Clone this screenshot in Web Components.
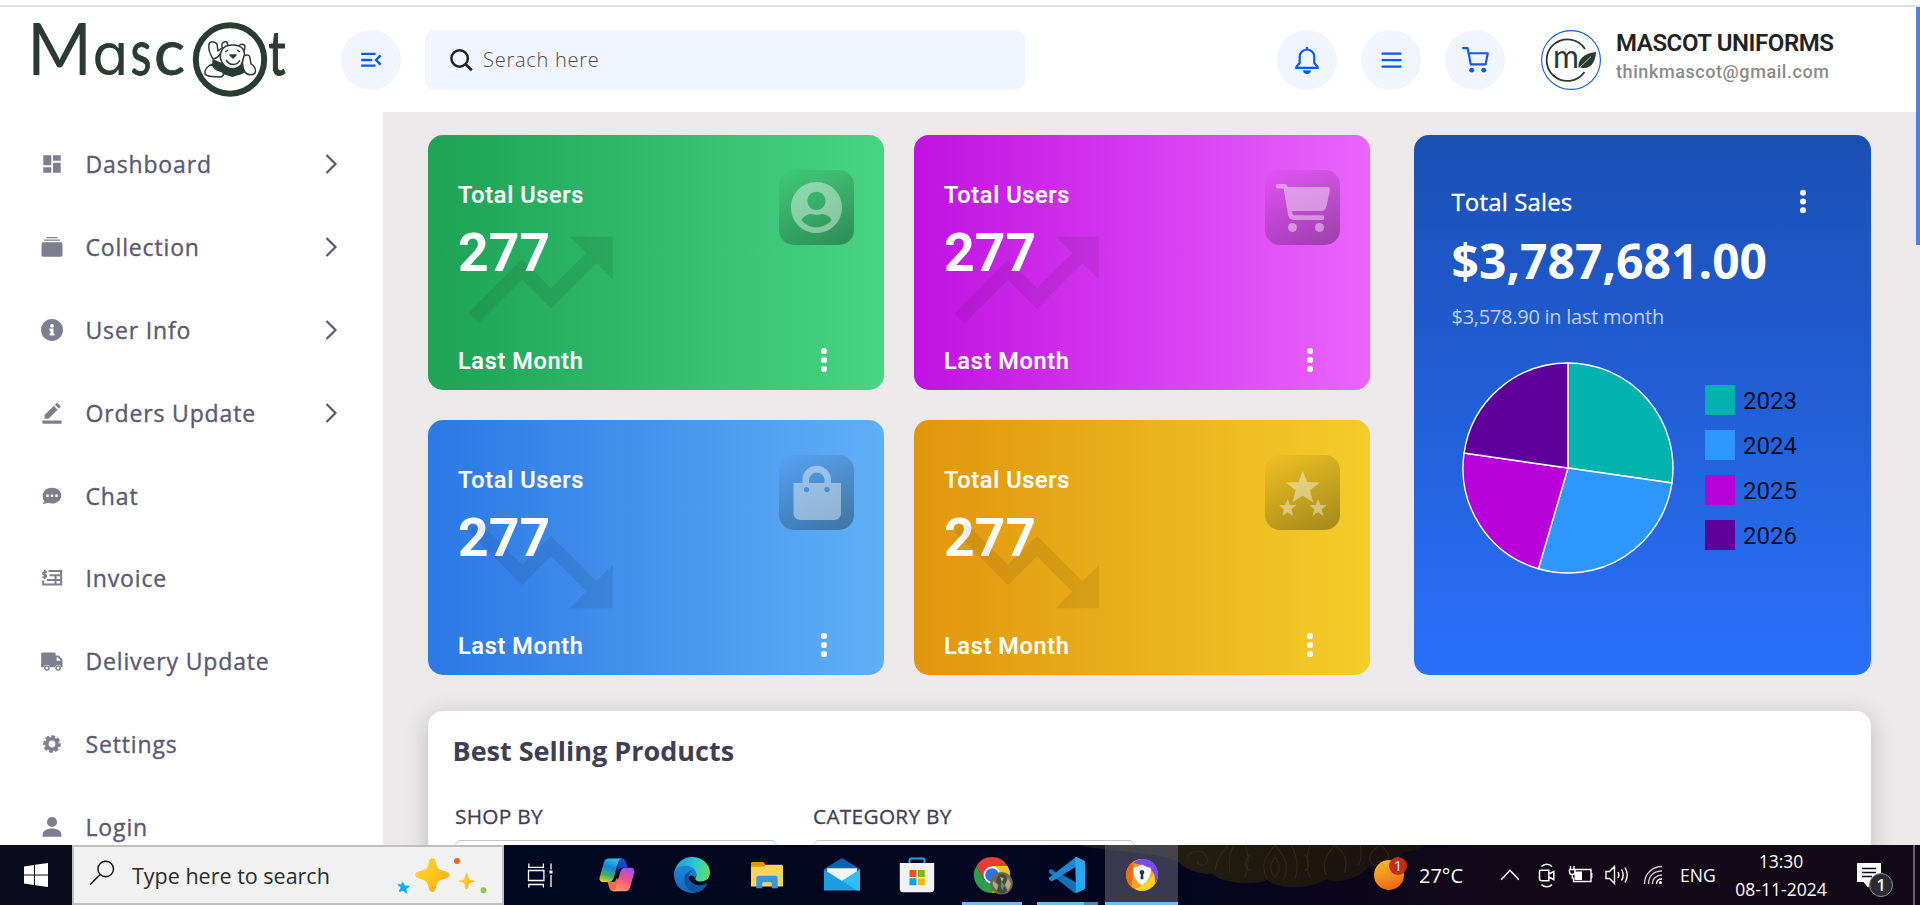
<!DOCTYPE html>
<html lang="en">
<head>
<meta charset="utf-8">
<title>Mascot Dashboard</title>
<style>
html,body{margin:0;height:100%;overflow:hidden;background:#fff;font-family:"Open Sans",sans-serif}
</style>
</head>
<body>
<app-shell></app-shell>
<script>
const define=(name,markup,setup)=>customElements.define(name,class extends HTMLElement{
  connectedCallback(){
    if(this.shadowRoot)return;
    const t=document.createElement('template');
    t.innerHTML=typeof markup==='function'?markup(this):markup;
    this.attachShadow({mode:'open'}).append(t.content.cloneNode(true));
    if(setup)setup(this);
  }
});

/* name: [viewBox, drawing] */
const ICONS={
  dashboard:['0 0 24 24','<path d="M3.3 3.3h8v10h-8zM3.3 15.2h8v5.5h-8zM13 3.3h7.7v5.5H13zM13 10.7h7.7v10H13z"/>'],
  collection:['0 0 24 24','<path d="M6.5 2h11v1.2h-11zM4 4.6h16v1.2H4zM3 7.2h18a1.5 1.5 0 0 1 1.5 1.5v11.4a1.6 1.6 0 0 1-1.6 1.6H3.1a1.6 1.6 0 0 1-1.6-1.6V8.7A1.5 1.5 0 0 1 3 7.2z"/>'],
  info:['0 0 512 512','<path d="M256 22C127 22 22 127 22 256s105 234 234 234 234-105 234-234S385 22 256 22zm0 104a40 40 0 1 1 0 80 40 40 0 0 1 0-80zm54 238c0 6-5 11-11 11h-86c-6 0-11-5-11-11v-23c0-6 5-11 11-11h11v-60h-11c-6 0-11-5-11-11v-23c0-6 5-11 11-11h64c6 0 11 5 11 11v94h11c6 0 11 5 11 11z"/>'],
  edit:['0 0 24 24','<path d="M2.5 19.6h19v3.2h-19zM4.6 17.8v-3.9l9.2-9.1 3.9 3.9-9.2 9.1zM14.9 3.7l1.3-1.3c.5-.5 1.200-.5 1.700 0l2.200 2.200c.5.5.5 1.200 0 1.700l-1.300 1.300z"/>'],
  chat:['0 0 24 24','<path fill-rule="evenodd" d="M12 3.800c5.200 0 9.300 3.500 9.300 7.900s-4.100 7.900-9.300 7.900c-1.500 0-2.900-.3-4.200-.8-1.400.9-3.200 1.200-4.800 1.100.7-.9 1.200-1.900 1.300-2.900a7.300 7.300 0 0 1-1.600-5.300c0-4.400 4.100-7.900 9.300-7.900zM6.300 10.600v2.400h2.400v-2.400zm4.500 0v2.400h2.400v-2.400zm4.500 0v2.400h2.400v-2.400z"/>'],
  invoice:['0 0 24 24','<g fill="none" stroke="currentColor" stroke-width="2"><path d="M9.500 5h11.700v13.600H3.200v-4M9.500 9.300h12M7 14h14M15.500 9.300v9.300M9.500 4.100v2"/><path stroke-width="1.600" d="M7 6.100H4.200c-1.800 0-1.800 2.600 0 2.600h1c1.800 0 1.800 2.600 0 2.600H2.300M4.700 4v9"/></g>'],
  truck:['0 0 24 24','<path fill-rule="evenodd" d="M2.500 3.600h11.800c.8 0 1.400.6 1.400 1.400v1.500h3.200l3.600 4.200v7.500h-1.300a3.200 3.200 0 0 0-6.200 0H10a3.200 3.200 0 0 0-6.200 0H1.200V5c0-.8.500-1.400 1.300-1.400zM16.600 8.200v3.600h4.200L18 8.200z"/><path fill-rule="evenodd" d="M6.900 16.200a2.800 2.800 0 1 1 0 5.600 2.800 2.800 0 0 1 0-5.600zm0 1.500a1.300 1.300 0 1 0 0 2.600 1.300 1.300 0 0 0 0-2.600zM18.100 16.200a2.800 2.800 0 1 1 0 5.600 2.800 2.800 0 0 1 0-5.600zm0 1.500a1.300 1.300 0 1 0 0 2.600 1.300 1.300 0 0 0 0-2.600z"/>'],
  gear:['0 0 24 24','<circle cx="12" cy="12" r="5.200" fill="none" stroke="currentColor" stroke-width="3.600"/><circle cx="12" cy="12" r="7.500" fill="none" stroke="currentColor" stroke-width="2.600" stroke-dasharray="3.800 2.090" stroke-dashoffset="1"/>'],
  user:['0 0 24 24','<circle cx="12" cy="7" r="5"/><path d="M2.600 21.800v-2.300c0-3.600 3.900-6.100 9.400-6.100s9.400 2.500 9.400 6.100v2.300z"/>'],
  chevron:['0 0 24 24','<path d="M7.500 3l9 9-9 9" fill="none" stroke="currentColor" stroke-width="2.200"/>'],
  toggle:['0 0 24 24','<path d="M2.200 5.800h14.300M2.200 12h11M2.200 17.700h14.300M21.600 7.400L17 12l4.600 4.600" fill="none" stroke="currentColor" stroke-width="2.300"/>'],
  search:['0 0 24 24','<circle cx="10.200" cy="10" r="7.900" fill="none" stroke="currentColor" stroke-width="2.400"/><path d="M15.900 15.600l6 5.700" stroke="currentColor" stroke-width="2.600" fill="none"/>'],
  bell:['0 0 30 30','<path d="M15 2v3M15 4.500c-4.300 0-7.300 3.300-7.300 7.500v6L4.300 22v.8h21.400V22l-3.400-4V12c0-4.200-3-7.500-7.300-7.500z" fill="none" stroke="currentColor" stroke-width="2.200"/><path d="M11.200 25.200h7.600a3.800 3.800 0 0 1-7.600 0z"/>'],
  burger:['0 0 24 24','<path d="M2.500 5.400h19M2.500 11.600h19M2.500 17.800h19" stroke="currentColor" stroke-width="2.200" fill="none"/>'],
  cart:['0 0 30 30','<path d="M1.300 2.200h5.500l3.300 16.800h15.400L27.700 7.500H8" fill="none" stroke="currentColor" stroke-width="2.200" stroke-linejoin="round"/><circle cx="11" cy="25" r="2.500"/><circle cx="23.500" cy="25" r="2.500"/>'],
  account:['-21 -21 538 554','<path d="M248 8C111 8 0 119 0 256s111 248 248 248 248-111 248-248S385 8 248 8zm0 96c48.600 0 88 39.400 88 88s-39.400 88-88 88-88-39.400-88-88 39.400-88 88-88zm0 344c-58.700 0-111.300-26.600-146.500-68.200 18.800-35.400 55.600-59.800 98.500-59.800 2.400 0 4.800.4 7.100 1.100 13 4.200 26.600 6.900 40.900 6.900 14.300 0 28-2.700 40.900-6.900 2.300-.7 4.700-1.100 7.100-1.100 42.900 0 79.700 24.400 98.500 59.800C359.300 421.400 306.700 448 248 448z"/>'],
  basket:['0 0 75 75','<path d="M13 14h6.500c1.500 0 2.500 1 3 3h40c1.700 0 2.800 1.400 2.400 3l-3.600 17c-.7 2.700-2.500 4-5 4H27l.3 2c.3 1.600 1 2.300 2.500 2.300H57a2.300 2.300 0 0 1 0 4.600H29c-3.500 0-5.500-2-6-5.400L18.600 18.600H13a2.300 2.300 0 0 1 0-4.600z"/><circle cx="27.500" cy="57.500" r="4.500"/><circle cx="54.500" cy="57.500" r="4.500"/>'],
  bag:['0 0 75 75','<path fill-rule="evenodd" d="M14.500 28h9v-3.500a14 13.500 0 0 1 28.500 0V28h10v30.500a6.500 6.500 0 0 1-6.500 6.500H21a6.500 6.500 0 0 1-6.500-6.500zM30 28h15.500v-3a7.750 7.500 0 0 0-15.500 0zM27.500 32a2.600 2.600 0 1 0 0 5.200 2.600 2.600 0 0 0 0-5.200zm20.500 0a2.600 2.600 0 1 0 0 5.200 2.600 2.600 0 0 0 0-5.200z"/>'],
  stars:['0 0 75 75','<path d="M37.800 15.700l4.300 11.200 12.500.6-9.700 7.900 3.300 11.900-10.400-6.600-10.400 6.600 3.300-11.900-9.700-7.900 12.500-.6z"/><path d="M22.700 44l2.300 6 6.500.3-5.100 4 1.800 6.700-5.500-3.700-5.500 3.700 1.800-6.700-5.100-4 6.500-.3zM53 44l2.300 6 6.500.3-5.100 4 1.800 6.700-5.500-3.700-5.500 3.700 1.800-6.700-5.100-4 6.500-.3z"/>'],
  up:['0 0 24 24','<path d="m16 6 2.290 2.290-4.880 4.880-4-4L2 16.590 3.410 18l6-6 4 4 6.300-6.290L22 12V6z"/>'],
  down:['0 0 24 24','<path d="m16 18 2.290-2.290-4.880-4.880-4 4L2 7.410 3.410 6l6 6 4-4 6.300 6.290L22 12v6z"/>'],
  dots:['0 0 12 30','<circle cx="6" cy="6" r="3.100"/><circle cx="6" cy="15" r="3.100"/><circle cx="6" cy="24" r="3.100"/>'],
  start:['0 0 24 24','<path d="M0 3.400l9.900-1.400v9.400H0zM11 1.800L24 0v11.400H11zM0 12.400h9.900V22L0 20.600zM11 12.400h13V24l-13-1.800z"/>'],
  find:['0 0 26 26','<g fill="none" stroke="currentColor" stroke-width="1.400"><circle cx="16.700" cy="9" r="7.800"/><path d="M11.100 14.600L1.300 24.600"/></g>'],
  sparkle:['0 0 90 36','<defs><linearGradient id="y" x1="0" y1="0" x2="1" y2="1"><stop offset="0" stop-color="#ffd54a"/><stop offset=".5" stop-color="#fcc61a"/><stop offset="1" stop-color="#f0a020"/></linearGradient></defs><g fill="url(#y)"><path d="M36.300 1c2.200 0 3 1.500 3.800 5.200 1.300 5.300 2 6 7.400 7.600 4.300 1.200 5.800 2 5.800 4.200s-1.500 3-5.800 4.200c-5.400 1.600-6.100 2.300-7.400 7.600-.8 3.700-1.600 5.200-3.800 5.200s-3-1.500-3.800-5.200c-1.300-5.300-2-6-7.400-7.600-4.300-1.200-5.800-2-5.800-4.200s1.500-3 5.800-4.200c5.400-1.600 6.100-2.300 7.400-7.600C33.300 2.500 34.100 1 36.300 1z"/><path d="M70.700 16c1.500 0 1.600 5.500 3 6.500s5 .5 5 1.700-4 .8-5.200 1.900-1.300 6.300-2.800 6.300-1.600-5.200-2.800-6.300-5.200-.7-5.200-1.900 4-.7 5.200-1.700S69.200 16 70.700 16z"/></g><path fill="#0aaef2" d="M6 25c1.400-.4 2.300 3.300 3.300 3.600s4-.7 4.200.6-2.700 1.800-3 2.700 1.400 4 .2 4.500-2.300-2.500-3.300-2.700-3.700 2-4.400.8 1.700-2.500 1.600-3.700-3.200-2-2.700-3.200 3 .3 3.600-.2S5 25.200 6 25z"/><circle cx="61" cy="4" r="3" fill="#f2622a"/><circle cx="88" cy="33" r="3" fill="#8bc83f" transform="translate(-.5 .3)"/>'],
  taskview:['0 0 36 36','<g transform="translate(-1.700 0)"><g fill="none" stroke="#fff" stroke-width="1.300"><path d="M6.200 13.500h15.400v10H6.200zM6.500 6.500v3.800h14.600V6.500M6.500 30.500v-3h14.600v3M28.700 6.500v6M28.700 18v12"/></g><path fill="#fff" d="M27.200 13.500h3v3h-3z"/></g>'],
  copilot:['0 0 36 36','<defs><linearGradient id="a" x1=".5" y1="0" x2=".2" y2="1"><stop offset="0" stop-color="#29c0f2"/><stop offset=".35" stop-color="#1384dc"/><stop offset=".7" stop-color="#3dae6b"/><stop offset="1" stop-color="#f5d016"/></linearGradient><linearGradient id="b" x1=".7" y1="0" x2=".3" y2="1"><stop offset="0" stop-color="#9b52ee"/><stop offset=".45" stop-color="#f0508c"/><stop offset="1" stop-color="#ff9a62"/></linearGradient></defs><path fill="#1549cf" d="M20 1.500h3c2.500 0 3.400 1.500 4 3.600l1.700 5.500H24c-3 0-4.500 1.600-5.400 5z"/><path fill="#ff6a3c" d="M8.500 25h5.300c2.500 0 3.200-1.500 4-4.500L21 28l-3 6.200h-4c-2.300 0-3.200-1.400-3.800-3.600z"/><path fill="url(#a)" d="M9.500 1.500h13c-2.100.8-3 2.700-3.700 5.300L15 20c-1 3.600-2.400 5-5 5H4.500C1 25 0 22.500.9 19.400L5 5.300c.8-2.600 2.200-3.800 4.500-3.800z"/><path fill="url(#b)" d="M26.500 34.300h-13c2.100-.8 3-2.700 3.700-5.300L21 15.800c1-3.600 2.400-5 5-5h5.500c3.500 0 4.500 2.500 3.600 5.600L31 30.500c-.8 2.600-2.200 3.800-4.500 3.800z"/>'],
  edge:['0 0 36 36','<defs><linearGradient id="e" x1="0" y1=".4" x2="1" y2=".6"><stop offset="0" stop-color="#1d9fe0"/><stop offset=".55" stop-color="#32c6cf"/><stop offset="1" stop-color="#60e05a"/></linearGradient><linearGradient id="f" x1="0" y1="0" x2="0" y2="1"><stop offset="0" stop-color="#1d87d8"/><stop offset="1" stop-color="#1267bd"/></linearGradient></defs><path fill="url(#e)" d="M0 17C1 7 8.500 0 18 0c10.500 0 18 7.500 18 15.500 0 5.500-4 9-9 9-4.500 0-6.500-1.800-5.500-3.500 2.500-4-.5-10-8-10C7 11 2 13 0 17z"/><path fill="url(#f)" d="M0 18c0-6 5.500-9.500 11-9.500 7 0 11.500 4.500 11.200 8.700-.1 2-1.200 2.600-1.200 4.300-1.500-4-6-4-7.500 1-1.300 6 3 12 9.500 13C9 38 0 28.500 0 18z"/><path fill="#0f559f" d="M10.500 20c1-4 4.500-6.500 8-6.500-4.500 3-5 9 0 12.500 4.500 3 10 2.500 13.500.5.800-.4 1.300.3.800 1.200C30 32.500 26 35.500 21 35.500c-6.500-1-12-8.500-10.500-15.500z"/>'],
  folder:['0 0 36 36','<path fill="#e09c08" d="M2 6.500C2 5.700 2.500 5 3.400 5h11l2 2.500-2 3H2z"/><path fill="#ffd25a" d="M2 9.700h12.500l2-2h16c.9 0 1.500.6 1.500 1.500V29.500H2z"/><path fill="#3a96e0" d="M7.300 31.200v-10c0-1.600 1-2.500 2.500-2.500h16.400c1.600 0 2.500 1 2.500 2.500v10h-6V26.700c0-1-.5-1.500-1.500-1.500h-6.400c-1 0-1.500.5-1.500 1.500v4.500z"/>'],
  mail:['0 0 36 36','<path fill="#0d61b5" d="M0 12L18 1l18 11v12H0z"/><path fill="#f5f5f7" d="M3 11.300h30V22L18 28 3 22z"/><path fill="#1f9de4" d="M0 12.500L18 24 36 12.500V33.500H0z"/><path fill="#30bdf3" d="M36 12.500V33.500H33L15 22l3 2z"/>'],
  store:['0 0 36 36','<path d="M10.500 8V3.500c0-1.300.7-2 2-2h11c1.300 0 2 .7 2 2V8" fill="none" stroke="#22a7ea" stroke-width="2"/><path fill="#f2f2f2" d="M.8 6h34.400v26c0 2-1.300 3.300-3.300 3.300H4C2 35.300.8 34 .8 32z"/><path fill="#f04e24" d="M10.500 13h7v7h-7z"/><path fill="#7fba00" d="M18.800 13h7v7h-7z"/><path fill="#00a3ee" d="M10.500 21.300h7v7h-7z"/><path fill="#ffb800" d="M18.800 21.300h7v7h-7z"/>'],
  chrome:['0 0 36 36','<path fill="#e53e32" d="M2.400 9L10.200 22.500 18 9h15.600A18 18 0 0 0 2.400 9z"/><path fill="#2e9e4c" d="M2.400 9A18 18 0 0 0 18 36l7.800-13.500H10.200z"/><path fill="#fbc316" d="M33.600 9H18l7.800 13.500L18 36A18 18 0 0 0 33.600 9z"/><circle cx="18" cy="18" r="8.500" fill="#fff"/><circle cx="18" cy="18" r="6.800" fill="#2f73e6"/><circle cx="27.500" cy="26.300" r="11.300" fill="#6f6b50"/><path fill="#4a4837" d="M24 19c2-3 7-3 8 0l1 5-3 4 3 6-5 3-5-3 2-6-3-4z"/><path fill="#b5a88c" d="M19 24l5 4-1 5c-3-2-5-5-4-9zM34 21l3 6-3 7-3-6zM26 20l4 1-2 4z"/><path fill="#49a066" d="M27.500 24l3 5-2 4-2-3z"/>'],
  vscode:['0 0 36 36','<path fill="#1173b8" d="M27 0L9.500 17.500 2.500 12 0 13.200v2.600L25.500 36 27 35V25.500L14 18z"/><path fill="#1b88d2" d="M0 22.500L2.500 24.500 27 9.800V0L0 20.800z"/><path fill="#28a6f2" d="M26 0.300L27.500 0 35 3.500c.7.300 1 .9 1 1.600v25.800c0 .7-.3 1.300-1 1.600L27.500 36l-1.500-.8L27 33z"/>'],
  shield:['0 0 36 36','<circle cx="18" cy="18" r="16" fill="#fda21c"/><path fill="#7a4bf0" d="M9 6c7-6 17-5 22 2 4 6 4 13 0 18 1-9-3-15-10-17z"/><path fill="#ffcf2a" d="M31 26c-4 7-13 10-20 6l10-5 9-11z"/><path fill="#ee6a18" d="M9 5C0 11 0 24 8 30c-1-5 1-9 2-14z"/><path fill="#fff" d="M18 7.500c3 2 5.500 3 8.800 3.300.5 8-2.500 13.500-8.800 17.700-6.300-4.200-9.300-9.700-8.800-17.700C12.500 10.500 15 9.500 18 7.500z"/><path fill="#223056" d="M18 13a2.500 2.500 0 0 1 1.200 4.600l.3 4.600h-3l.3-4.600A2.500 2.500 0 0 1 18 13z"/>'],
  caret:['0 0 20 14','<path d="M1.200 11.700L10 2.300l8.800 9.400" fill="none" stroke="#fff" stroke-width="1.600"/>'],
  meet:['0 0 18 26','<g fill="none" stroke="#fff" stroke-width="1.500"><path d="M2.500 8.300h8.300v10.500H3.500c-1.500 0-2-.6-2-2V10c0-1.200.3-1.700 1-1.700zM10.800 12l5-2.500v8l-5-2.500"/><path d="M3.500 4.500c2.500-3 8-3 10.500 0M3.500 22.500c2.500 3 8 3 10.500 0" /></g>'],
  battery:['0 0 26 20','<g fill="none" stroke="#fff" stroke-width="1.400"><path d="M6 4.500h17v12H5.500v-4M23.700 8v5M2.500 1v3M6 1v3M1.500 4.500h5.500v2.500c0 1.600-1 2.500-2.700 2.500S1.500 8.600 1.500 7zM4.200 9.500v4"/></g><path fill="#fff" d="M6.500 6.500h7.500v8.500H6.500z"/>'],
  speaker:['0 0 26 22','<g fill="none" stroke="#fff" stroke-width="1.400"><path d="M2 7.500h3.500l5-5v17l-5-5H2zM14 8c1.200 2 1.200 4 0 6M17.500 5.500c2.200 3.500 2.200 7.500 0 11M21 3.500c3 5 3 10 0 15"/></g>'],
  wifi:['0 0 20 20','<g fill="none" stroke="#ccc" stroke-width="1.400"><path d="M1.500 19C1.500 9 9 1.500 19 1.500M5.500 19C5.500 11 11 6 19 6M9.500 19c0-5.500 4-9 9.500-9"/></g><path d="M13.500 19c0-3 2-5 5.500-5" fill="none" stroke="#fff" stroke-width="1.400"/><circle cx="17.500" cy="17.500" r="1.500" fill="#fff"/>'],
};

define('ui-icon',el=>{
  const [box,art]=ICONS[el.getAttribute('name')];
  const w=el.getAttribute('w')||24,h=el.getAttribute('h')||w;
  return `<style>:host{display:block;width:${w}px;height:${h}px;flex:none}svg{display:block;width:100%;height:100%;overflow:visible}</style><svg viewBox="${box}" fill="currentColor">${art}</svg>`;
});

define('round-button',`<style>:host{display:grid;place-items:center;width:60px;height:60px;border-radius:50%;background:#f0f5ff;color:#0858f7;flex:none}</style><slot></slot>`);

define('brand-logo',`<style>:host{display:block;width:264px;height:98px}svg{display:block;overflow:visible}text{fill:#2a3c31}</style>
<svg width="264" height="98" viewBox="26 7 264 98">
<g font-family="Lato" font-size="72"><text x="27" y="75" textLength="65" lengthAdjust="spacingAndGlyphs">M</text>
<text x="92.200" y="75" font-family="Inter" font-size="59" textLength="36" lengthAdjust="spacingAndGlyphs" style="font-feature-settings:'cv11'">a</text>
<text x="130.500" y="75" font-size="62" textLength="21" lengthAdjust="spacingAndGlyphs" stroke="#2a3c31" stroke-width=".8">s</text>
<text x="154" y="75" font-size="62" textLength="31" lengthAdjust="spacingAndGlyphs" stroke="#2a3c31" stroke-width=".8">c</text>
<text x="268.500" y="75" font-size="61" textLength="17" lengthAdjust="spacingAndGlyphs" stroke="#2a3c31" stroke-width="1.200">t</text></g>
<circle cx="230" cy="59.500" r="34.200" fill="#fff" stroke="#2a3c31" stroke-width="6"/>
<g fill="#fff" stroke="#2a3c31" stroke-width="1.500" stroke-linejoin="round">
<path fill="#2a3c31" d="M213 60l9 4 22 1 4 5-8 4-8 2-10-3-9-8z"/>
<path d="M213 59c-3-5-5-10-4-15 1-3 6-3 8 0l1 7 5-4M213 59c4-1 7-3 8-7"/>
<path d="M222 47c-1-4 2-6 5-5l1 4M239 46c2-3 6-2 6 1s-1 4-2 5"/>
<path d="M222 50c3-6 16-7 21-1 3 5 1 11-2 16-4 5-13 5-17 0-4-4-5-10-2-15z"/>
<path d="M244 56c3-2 6-1 6 2l1 6c4 2 5 6 4 9-2 3-8 2-10-1-3-5-3-11-1-16z"/>
<path d="M213 64c-5 1-9 6-8 10 3 4 11 2 16 3 4-2 3-5-1-6-4-1-7-3-7-7z"/>
<path fill="none" d="M226 60c4 6 11 6 14 0M225 52l3-2M240 52l-3-2M224 71l9 5 9-5"/>
<path fill="#2a3c31" d="M230 55h6l-3 3z"/></g>
</svg>`);

define('user-avatar',`<style>:host{display:block;width:60px;height:60px}svg{display:block}</style>
<svg width="60" height="60" viewBox="0 0 60 60"><circle cx="30" cy="30" r="29.400" fill="#fff" stroke="#0858f7" stroke-width="1.100"/>
<path d="M44 19A20.800 20.800 0 1 0 43.500 42" fill="none" stroke="#2a3c31" stroke-width="1.800"/>
<text x="12" y="38" font-family="Lato" font-size="32" textLength="26" lengthAdjust="spacingAndGlyphs" fill="#2a3c31">m</text>
<path fill="#2a3c31" d="M37.500 38c-1-8 5-15 17.500-16-.5 11-6 18-15.500 15.500z"/><path d="M37 38.500c5-4 9-8 13-12" stroke="#fff" stroke-width=".7" fill="none"/></svg>`);

define('top-bar',`<style>
:host{display:flex;align-items:flex-start;background:#fff;height:105px;box-sizing:border-box;padding-left:26px}
brand-logo{margin-right:51px}
round-button{margin-top:23px}
.search{display:flex;align-items:center;width:600px;height:60px;margin:23px 0 0 24px;border-radius:10px;background:#f0f5ff;box-sizing:border-box;padding-left:24px;color:#222}
.search span{margin-left:9px;font-weight:300;font-size:20px;letter-spacing:.75px;color:#4c4c4c;line-height:26px;margin-top:-1px}
.actions{display:flex;gap:24px;margin-left:252px}
user-avatar{margin:23px 0 0 36px}
.who{margin:22px 0 0 15px;font-family:Roboto,sans-serif;white-space:nowrap}
.name{font-size:24px;line-height:28px;font-weight:600;letter-spacing:-.42px;color:#222}
.mail{font-size:18px;line-height:24px;margin-top:3px;font-weight:500;letter-spacing:.58px;color:#8b8b8b}
</style>
<brand-logo></brand-logo>
<round-button><ui-icon name="toggle" w="24"></ui-icon></round-button>
<div class="search"><ui-icon name="search" w="25"></ui-icon><span>Serach here</span></div>
<div class="actions"><round-button><ui-icon name="bell" w="30"></ui-icon></round-button><round-button><ui-icon name="burger" w="25"></ui-icon></round-button><round-button><ui-icon name="cart" w="29"></ui-icon></round-button></div>
<user-avatar></user-avatar>
<div class="who"><div class="name">MASCOT UNIFORMS</div><div class="mail">thinkmascot@gmail.com</div></div>`);

define('nav-item',el=>`<style>
:host{display:flex;align-items:center;height:82.900px;padding:0 38px 0 40px;color:#5a5a72;flex:none}
.i{color:#7f7e91}.t{flex:1;margin-left:21.500px;font-size:23px;font-weight:500;letter-spacing:.85px;white-space:nowrap;-webkit-text-stroke:.35px currentColor}
.c{margin-right:2px}
</style><ui-icon class="i" name="${el.getAttribute('icon')}" w="24"></ui-icon><span class="t"><slot></slot></span>${el.hasAttribute('more')?'<ui-icon class="c" name="chevron" w="24"></ui-icon>':''}`);

define('side-nav',`<style>:host{display:flex;flex-direction:column;background:#fff;padding-top:10.500px;width:383px;box-sizing:border-box;overflow:hidden}</style>
<nav-item icon="dashboard" more>Dashboard</nav-item><nav-item icon="collection" more>Collection</nav-item><nav-item icon="info" more>User Info</nav-item><nav-item icon="edit" more>Orders Update</nav-item><nav-item icon="chat">Chat</nav-item><nav-item icon="invoice">Invoice</nav-item><nav-item icon="truck">Delivery Update</nav-item><nav-item icon="gear">Settings</nav-item><nav-item icon="user">Login</nav-item>`);

define('stat-card',el=>`<style>
:host{display:block;position:relative;height:255px;border-radius:15px;background:linear-gradient(to right,${el.getAttribute('from')},${el.getAttribute('to')});color:#fff;font-family:Roboto,sans-serif;box-sizing:border-box;padding:44.500px 0 0 30px}
.t{font-size:23.500px;line-height:30px;font-weight:500;letter-spacing:.65px;-webkit-text-stroke:.2px currentColor}
.n{font-size:53.500px;line-height:60px;font-weight:700;margin-top:13.500px}
.f{display:flex;align-items:center;margin-top:62.500px}
.f ui-icon{margin:-2px 54px 0 auto}
.box{position:absolute;right:30px;top:35px;width:75px;height:75px;border-radius:15px;background:linear-gradient(150deg,rgba(0,0,0,0),rgba(0,0,0,.33));display:grid;place-items:center}
.box ui-icon{color:rgba(255,255,255,.42)}
.trend{position:absolute;left:26px;top:58px;color:rgba(0,0,0,.075)}
</style>
<div class="t"><slot></slot></div><div class="n">277</div>
<div class="f"><span class="t">Last Month</span><ui-icon name="dots" w="12" h="30"></ui-icon></div>
<div class="box"><ui-icon name="${el.getAttribute('icon')}" w="${el.getAttribute('size')||75}"></ui-icon></div>
<ui-icon class="trend" name="${el.getAttribute('trend')}" w="173.500"></ui-icon>`);

define('pie-chart',`<style>:host{display:block;width:214px;height:214px}svg{display:block}</style><svg width="214" height="214" viewBox="-107 -107 214 214"></svg>`,el=>{
  const stops=[0,3/11,6/11,8.5/11,1],colors=['#02b2af','#2e96ff','#b800d8','#60009b'],R=105;
  const pt=f=>[R*Math.sin(f*2*Math.PI),-R*Math.cos(f*2*Math.PI)].map(v=>v.toFixed(2)).join(' ');
  el.shadowRoot.querySelector('svg').innerHTML=colors.map((c,i)=>`<path d="M0 0L${pt(stops[i])}A${R} ${R} 0 0 1 ${pt(stops[i+1])}Z" fill="${c}" stroke="#fff" stroke-width="1.400" stroke-linejoin="round"/>`).join('');
});

define('legend-item',el=>`<style>:host{display:flex;align-items:flex-start;gap:8px;height:30px;font:24px/30px Roboto,sans-serif;color:rgba(0,0,0,.87)}i{width:30px;height:30px;background:${el.getAttribute('color')}}span{line-height:32px}</style><i></i><span><slot></slot></span>`);

define('sales-card',`<style>
:host{display:block;box-sizing:border-box;height:540px;border-radius:15px;background:linear-gradient(to bottom,#1a4fb4,#2a70fa);color:#fff;padding:52px 0 0 37.500px}
.h{display:flex;font-size:24px;line-height:30px;font-weight:500}
.h span{-webkit-text-stroke:.35px currentColor;letter-spacing:.15px}
.h ui-icon{margin:0 62px 0 auto}
.n{font-size:48px;line-height:60px;font-weight:700;margin-top:14px}
.s{font-size:20px;line-height:28px;margin-top:12px;letter-spacing:-.26px;color:rgba(255,255,255,.72)}
.c{display:flex;margin:29.500px 0 0 9.500px;align-items:center}
.l{display:grid;gap:15px;margin-left:30px}
</style>
<div class="h"><span>Total Sales</span><ui-icon name="dots" w="12" h="29"></ui-icon></div>
<div class="n">$3,787,681.00</div><div class="s">$3,578.90 in last month</div>
<div class="c"><pie-chart></pie-chart><div class="l"><legend-item color="#02b2af">2023</legend-item><legend-item color="#2e96ff">2024</legend-item><legend-item color="#b800d8">2025</legend-item><legend-item color="#60009b">2026</legend-item></div></div>`);

define('filter-field',`<style>:host{display:block;width:322px;color:#403e57;font-size:20.800px;line-height:28px;font-weight:500;letter-spacing:.3px;-webkit-text-stroke:.3px #403e57}div{height:50px;margin-top:10px;border:1px solid #c4c4c4;border-radius:6px;box-sizing:border-box}</style><slot></slot><div></div>`);

define('product-panel',`<style>
:host{display:block;height:400px;background:#fff;border-radius:15px;box-shadow:0 5px 25px rgba(0,0,0,.2);box-sizing:border-box;padding:24px 0 0 24.500px;color:#403e57}
.t{font-size:27px;line-height:32px;font-weight:700}
.f{display:flex;gap:36px;margin:35px 0 0 2.500px}
</style><div class="t">Best Selling Products</div><div class="f"><filter-field>SHOP BY</filter-field><filter-field>CATEGORY BY</filter-field></div>`);

define('dash-board',`<style>
:host{display:block;background:#ebe9ea;padding:23px 45px 0 45px;overflow:hidden}
.g{display:grid;grid-template-columns:942px 457px;gap:44px}
.k{display:grid;grid-template-columns:456px 456px;gap:30px}
product-panel{margin-top:36px;width:1443px}
</style>
<div class="g"><div class="k">
<stat-card from="#1da256" to="#48d483" icon="account" size="57" trend="up">Total Users</stat-card>
<stat-card from="#c012e2" to="#eb64fe" icon="basket" trend="up">Total Users</stat-card>
<stat-card from="#2c78e5" to="#60aff5" icon="bag" trend="down">Total Users</stat-card>
<stat-card from="#e1950e" to="#f3cd29" icon="stars" trend="down">Total Users</stat-card>
</div><sales-card></sales-card></div><product-panel></product-panel>`);

define('task-button',el=>`<style>:host{display:grid;place-items:center;width:75px;height:60px;position:relative;flex:none;box-sizing:border-box}
:host([active]){background:rgba(90,90,110,.62);margin:0 1px;width:73px}
:host([open])::after{content:"";position:absolute;bottom:0;left:8px;right:7px;height:3px;background:#76b9ed}
:host([stacked])::after{right:0;left:8px;width:61px;background:linear-gradient(90deg,#76b9ed 47px,#5487ad 47px)}
:host([active])::after{left:0;right:0}</style><ui-icon name="${el.getAttribute('icon')}" w="36"></ui-icon>`);

define('system-tray',`<style>
:host{display:flex;align-items:center;height:60px;color:#fff;width:741px;position:relative}
.w{position:relative;width:30px;height:30px;border-radius:50%;background:linear-gradient(160deg,#f3c233,#f5891c 55%,#ee5a0a);margin-left:195px}
.w b{position:absolute;left:15px;top:-3px;width:18px;height:18px;border-radius:50%;background:#c42b1c;font:14px/18px "Open Sans",sans-serif;text-align:center}
.t{font-size:20px;margin-left:15px;width:81px}
.e{font-size:17.500px;margin-left:17px;width:55px}
.clock{width:92px;font-size:17.500px;line-height:28px;text-align:center;white-space:nowrap}
.note{position:relative;margin-left:30px;width:24px;height:26px;margin-top:1px}
.note b{position:absolute;left:12px;top:10px;width:22px;height:22px;border:1px solid #8c8c90;border-radius:50%;background:#2c2b33;font:600 16px/22px "Open Sans",sans-serif;text-align:center}
.end{position:absolute;right:5px;top:0;width:2px;height:60px;background:#65636c}
svg{display:block}
</style>
<div class="w"><b>1</b></div><span class="t">27°C</span>
<ui-icon name="caret" w="20" h="14"></ui-icon>
<ui-icon name="meet" w="18" h="26" style="margin-left:18px"></ui-icon>
<ui-icon name="battery" w="26" h="20" style="margin-left:12px"></ui-icon>
<ui-icon name="speaker" w="26" h="22" style="margin-left:10px"></ui-icon>
<ui-icon name="wifi" w="20" h="20" style="margin-left:13px"></ui-icon>
<span class="e">ENG</span>
<div class="clock"><div>13:30</div><div>08-11-2024</div></div>
<div class="note"><svg width="24" height="26"><path fill="#fff" d="M0 0h24v19h-8.500L11 24.500 6.500 19H0z"/><path d="M5 5.500h14M5 9.500h14M5 13.500h10" stroke="#120818" stroke-width="1.300"/></svg><b>1</b></div>
<div class="end"></div>`);

define('task-bar',`<style>
:host{display:flex;height:60px;background:linear-gradient(90deg,#0b0b1e 0,#0b0b1e 72px,#020820 504px,#040620 1180px,#0a061e 1300px,#120818 1500px,#120818);position:relative}
.wall{position:absolute;left:1080px;top:0}
.start{width:72px;display:grid;place-items:center;color:#fff}
.q{width:432px;box-sizing:border-box;border:2px solid #bfbfbf;background:#f1f1f1;display:flex;align-items:center;color:#111;padding-left:15px}
.q span{font-size:21.500px;margin-left:17px;color:#2b2b2b;white-space:nowrap;flex:1}
.q .sp{margin-right:16px}
.find{margin-top:-4px}
system-tray{margin-left:auto}
</style>
<svg class="wall" width="360" height="42" viewBox="0 0 360 42"><defs><linearGradient id="g" x1="0" x2="1"><stop offset="0" stop-color="#1d1c22"/><stop offset=".3" stop-color="#221e10"/><stop offset="1" stop-color="#18100f"/></linearGradient></defs><path fill="url(#g)" d="M0 0h345c-6 5-16 7-22 7-4 10-18 16-34 14-10 14-32 17-42 13-18 11-48 11-60 1-15 6-45 3-55-6-16 0-28-6-34-12C80 6 20 7 0 0z"/><g fill="none" stroke="#43320f" stroke-width="1.200" opacity=".6"><path d="M107 12c6-8 16-8 20 0s-8 12-10 4M135 26c2-14 8-20 14-26M150 28c-2-14 0-20 4-28M165 0c4 10 4 22 0 32M195 0c-12 14-14 22-8 34M195 0c12 14 14 22 8 36M215 34c4-12 2-24-4-34M230 0c-4 12-4 22 0 33M256 0c-12 10-14 20-10 30M256 0c10 10 12 18 8 28M280 0c2 8 2 14-2 20M300 0c-12 8-12 14-8 19M300 0c8 6 10 10 8 14M195 12c-6 8-6 14 0 20 6-6 6-12 0-20M170 10c-6 6-6 12 0 16M225 10c5 6 5 12 0 16"/></g></svg>
<div class="start"><ui-icon name="start" w="24"></ui-icon></div>
<div class="q"><ui-icon class="find" name="find" w="26"></ui-icon><span>Type here to search</span><ui-icon class="sp" name="sparkle" w="90" h="36"></ui-icon></div>
<task-button icon="taskview"></task-button><task-button icon="copilot"></task-button><task-button icon="edge"></task-button><task-button icon="folder"></task-button><task-button icon="mail"></task-button><task-button icon="store"></task-button><task-button icon="chrome" open></task-button><task-button icon="vscode" open stacked></task-button><task-button icon="shield" open active></task-button>
<system-tray></system-tray>`);

define('app-shell',`<style>
:host{display:grid;grid-template-rows:7px 838px 60px;width:1920px;height:905px;overflow:hidden}
.edge{box-sizing:border-box;border-bottom:2px solid #e0e0e0;background:#fff}
.page{display:grid;grid-template-columns:1916px 4px}
.view{display:grid;grid-template-rows:105px 733px}
.body{display:grid;grid-template-columns:383px 1533px;overflow:hidden}
.track{background:#ebe9ea}.thumb{height:238px;background:#4a80f0}
</style>
<div class="edge"></div>
<div class="page"><div class="view"><top-bar></top-bar><div class="body"><side-nav></side-nav><dash-board></dash-board></div></div><div class="track"><div class="thumb"></div></div></div>
<task-bar></task-bar>`);
</script>
</body>
</html>
